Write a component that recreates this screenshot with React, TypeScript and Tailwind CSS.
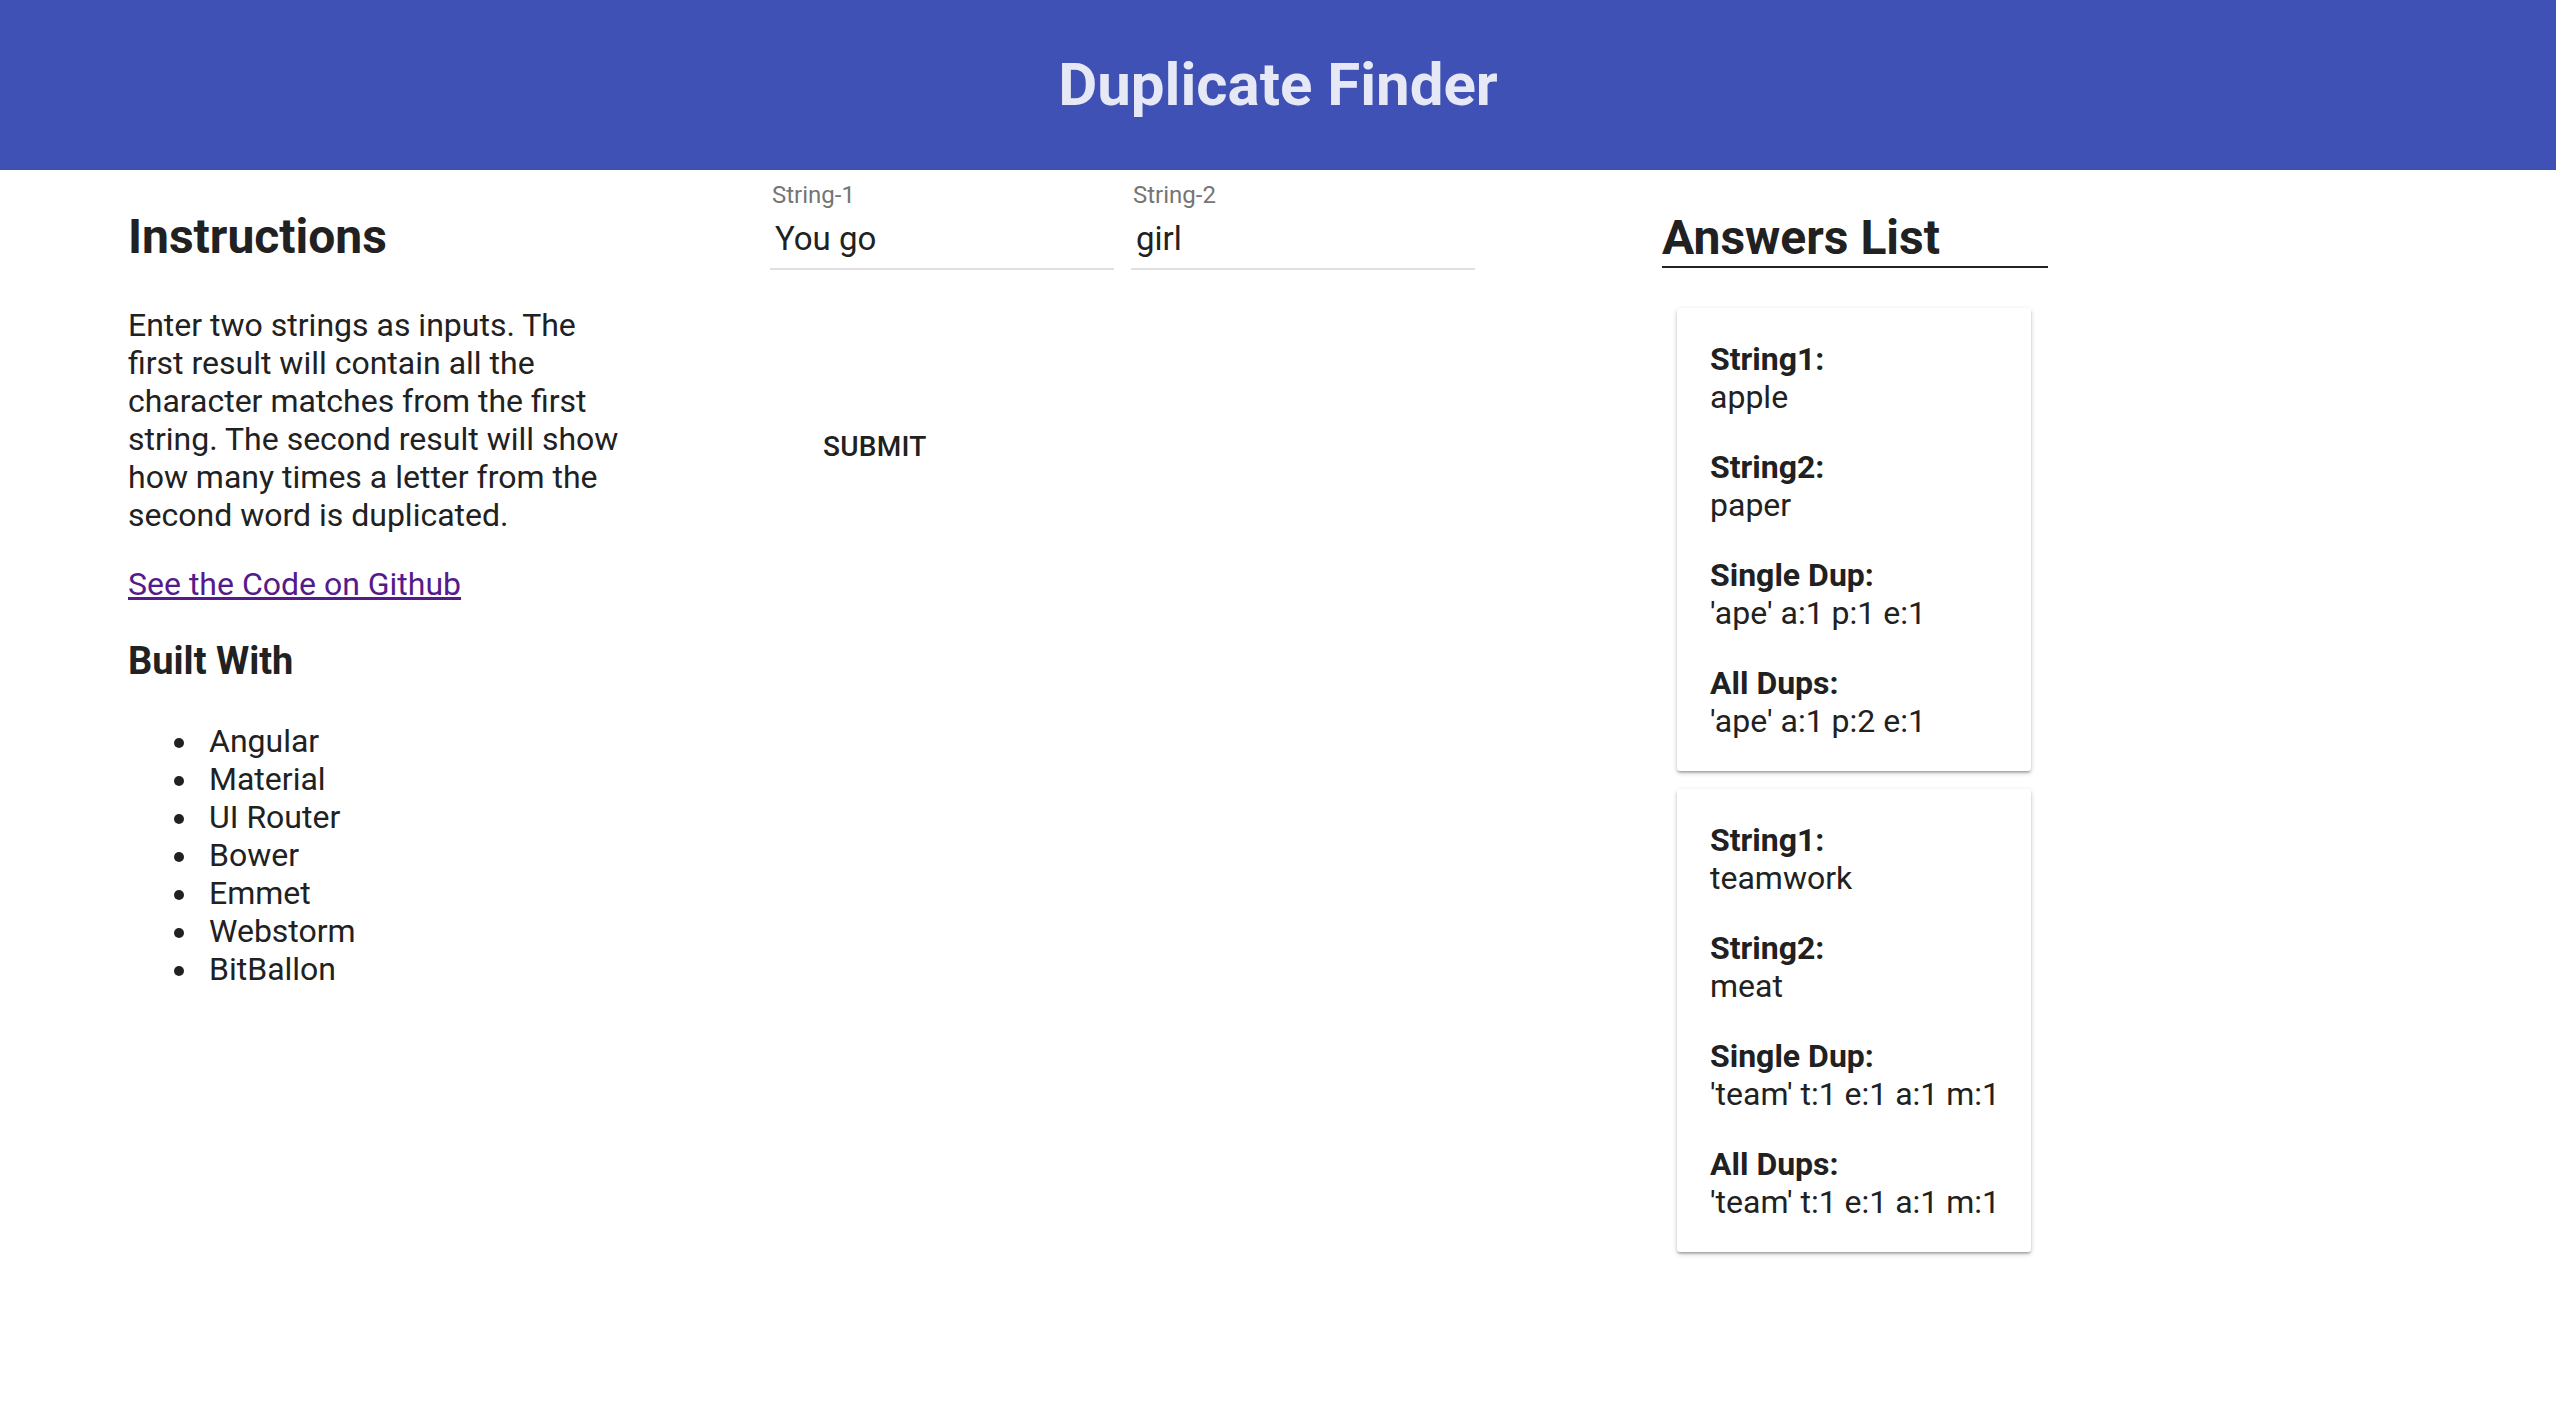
import React from 'react';

interface Answer {
    string1: string;
    string2: string;
    single: string;
    all: string;
}

const answers: Answer[] = [
    { string1: 'apple', string2: 'paper', single: "'ape' a:1 p:1 e:1", all: "'ape' a:1 p:2 e:1" },
    { string1: 'teamwork', string2: 'meat', single: "'team' t:1 e:1 a:1 m:1", all: "'team' t:1 e:1 a:1 m:1" },
];

const builtWith = ['Angular', 'Material', 'UI Router', 'Bower', 'Emmet', 'Webstorm', 'BitBallon'];

function Field({ label, value }: { label: string; value: string }) {
    return (
        <div className="w-[344px]">
            <label className="block pl-[2px] text-[24px] leading-[27px] text-[#757575]">{label}</label>
            <input
                defaultValue={value}
                className="block mt-[9px] w-full h-[52px] pb-[10px] pl-[5px] text-[33px] leading-[40px] text-[#212121] bg-transparent outline-none border-b-2 border-[#e0e0e0]"
            />
        </div>
    );
}

function AnswerCard({ answer }: { answer: Answer }) {
    const rows = [
        ['String1:', answer.string1],
        ['String2:', answer.string2],
        ['Single Dup:', answer.single],
        ['All Dups:', answer.all],
    ];
    return (
        <div className="w-[354px] bg-white rounded-[3px] pl-[33px] pr-[16px] pt-[32px] pb-[31px] flex flex-col gap-[32px] shadow-[0_2px_5px_rgba(0,0,0,0.2),0_2px_2px_rgba(0,0,0,0.14),0_3px_2px_-2px_rgba(0,0,0,0.12)]">
            {rows.map(([label, value]) => (
                <div key={label} className="text-[32px] leading-[38px] whitespace-nowrap">
                    <div className="font-bold">{label}</div>
                    <div>{value}</div>
                </div>
            ))}
        </div>
    );
}

export default function App() {
    return (
        <div className="min-h-screen bg-white text-[#212121] font-['Roboto',sans-serif]">
            <header className="h-[170px] bg-[#3f51b5] flex items-center justify-center">
                <h1 className="text-[60px] leading-[70px] font-bold text-[#e6e8f5]">Duplicate Finder</h1>
            </header>

            <main className="flex">
                {/* instructions */}
                <section className="w-[770px] shrink-0 pl-[128px] pt-[38px]">
                    <h2 className="text-[48px] leading-[57px] font-bold">Instructions</h2>
                    <p className="mt-[41px] w-[500px] text-[32px] leading-[38px]">
                        Enter two strings as inputs. The first result will contain all the character matches from the first string. The second result will show how many times a letter from the second word is duplicated.
                    </p>
                    <a href="#" className="block mt-[31px] text-[32px] leading-[38px] text-[#551a8b] underline">
                        See the Code on Github
                    </a>
                    <h3 className="mt-[35px] text-[38px] leading-[46px] font-bold">Built With</h3>
                    <ul className="mt-[38px] text-[32px] leading-[38px]">
                        {builtWith.map((item) => (
                            <li key={item} className="flex items-center">
                                <span className="ml-[46px] mr-[25px] mt-[4px] w-[10px] h-[10px] rounded-full bg-[#212121] shrink-0" />
                                <span>{item}</span>
                            </li>
                        ))}
                    </ul>
                </section>

                {/* form */}
                <section className="w-[892px] shrink-0 pt-[12px]">
                    <div className="flex gap-[17px]">
                        <Field label="String-1" value="You go" />
                        <Field label="String-2" value="girl" />
                    </div>
                    <button className="mt-[153px] ml-[37px] px-[16px] py-[8px] text-[28px] leading-[32px] font-medium tracking-[0.01em] uppercase">
                        Submit
                    </button>
                </section>

                {/* answers */}
                <section className="w-[386px] shrink-0 pt-[39px]">
                    <h2 className="text-[48px] leading-[57px] font-bold border-b-2 border-[#212121]">Answers List</h2>
                    <div className="mt-[40px] ml-[15px] flex flex-col gap-[18px]">
                        {answers.map((a) => (
                            <AnswerCard key={a.string1} answer={a} />
                        ))}
                    </div>
                </section>
            </main>
        </div>
    );
}
